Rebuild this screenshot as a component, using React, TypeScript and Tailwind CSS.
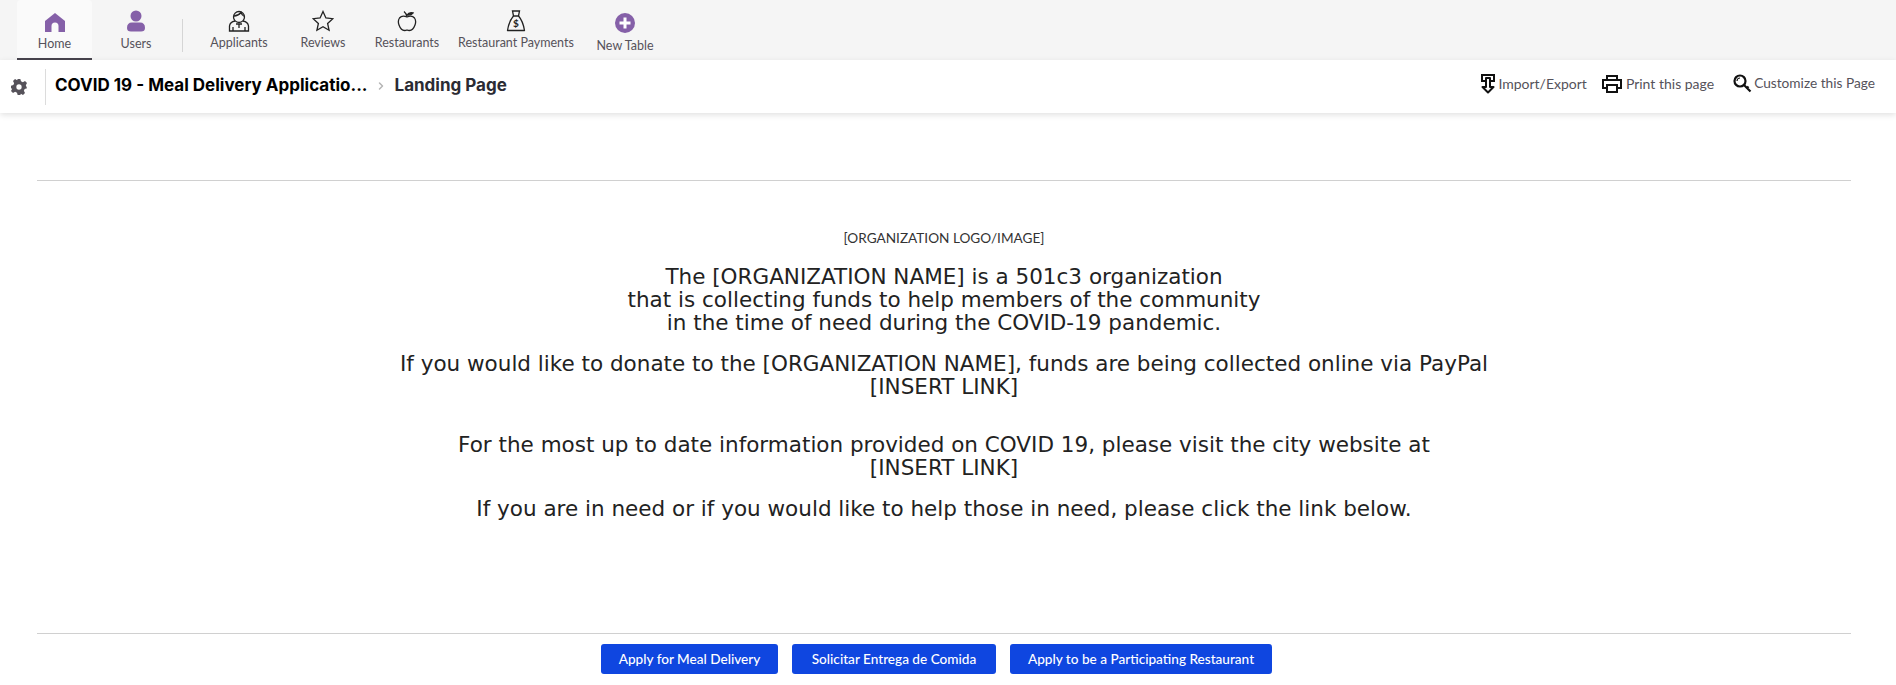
import { ChevronRight } from 'lucide-react'

function HomeIcon() {
  return (
    <svg width="20" height="20" viewBox="0 0 20 20" className="text-[#8560a8]" fill="currentColor">
      <path d="M10 1 L20 9 V20 H13.5 V14 Q13.5 10.5 10 10.5 Q6.5 10.5 6.5 14 V20 H0 V9 Z" />
    </svg>
  )
}

function UserIcon() {
  return (
    <svg width="18" height="22" viewBox="0 0 18 22" fill="#8560a8">
      <circle cx="9" cy="6" r="5.5" />
      <path d="M0 18 Q0 12.5 5 12.5 H13 Q18 12.5 18 18 Q18 21.5 14 21.5 H4 Q0 21.5 0 18 Z" />
    </svg>
  )
}

function ApplicantIcon() {
  return (
    <svg width="22" height="22" viewBox="0 0 22 22" fill="none" stroke="#222" strokeWidth="1.3">
      <circle cx="11" cy="7" r="5.5" />
      <path d="M6 6 Q10 6 13 2.5 Q14 5.5 16.5 6.5" />
      <path d="M7 11 Q2 12 1.5 16 V21 H20.5 V16 Q20 12 15 11" />
      <path d="M8 14 H14 M11 14 V18 M5 21 V17 M17 21 V17" />
    </svg>
  )
}

function StarIcon() {
  return (
    <svg width="22" height="22" viewBox="0 0 22 22" fill="none" stroke="#222" strokeWidth="1.3">
      <path d="M11 1.5 L13.9 8 L20.8 8.7 L15.6 13.4 L17.1 20.3 L11 16.8 L4.9 20.3 L6.4 13.4 L1.2 8.7 L8.1 8 Z" />
    </svg>
  )
}

function AppleIcon() {
  return (
    <svg width="20" height="22" viewBox="0 0 20 22" fill="none" stroke="#222" strokeWidth="1.3">
      <path d="M10 7 Q5 5 2.5 8 Q0.5 11 2 15 Q4 20.5 7.5 20.5 Q9 20.5 10 20 Q11 20.5 12.5 20.5 Q16 20.5 18 15 Q19.500 11 17.500 8 Q15 5 10 7 Z" />
      <path d="M10 7 Q9.500 3.500 7 1.500" />
      <path d="M10 5 Q12 2 16 3 Q14 5.500 10 5 Z" fill="#222" />
    </svg>
  )
}

function MoneyBagIcon() {
  return (
    <svg width="20" height="22" viewBox="0 0 20 22" fill="none" stroke="#222" strokeWidth="1.3">
      <path d="M6.500 1 H13.500 L12.500 6 H7.500 Z" />
      <path d="M7.500 6 Q3 11 1.500 20.500 H18.500 Q17 11 12.500 6" strokeLinejoin="round" />
      <text x="10" y="17" textAnchor="middle" fontSize="10" fontWeight="700" fill="#222" stroke="none" fontFamily="Lato, sans-serif">$</text>
    </svg>
  )
}

function PlusCircleIcon() {
  return (
    <svg width="20" height="20" viewBox="0 0 20 20">
      <circle cx="10" cy="10" r="10" fill="#8560a8" />
      <path d="M10 4.500 V15.500 M4.500 10 H15.500" stroke="#fff" strokeWidth="3" />
    </svg>
  )
}

function GearIcon() {
  return (
    <svg width="16" height="16" viewBox="0 0 24 24" fill="#56525a">
      <path fillRule="evenodd" d="M10 0 H14 L15 3.500 L17.800 4.700 L21 3 L24 6 L22.200 9.200 L23.300 12 L24 14 L20.500 15 L19.300 17.800 L21 21 L18 24 L14.800 22.200 L14 24 H10 L9 20.500 L6.200 19.300 L3 21 L0 18 L1.800 14.800 L0 14 V10 L3.500 9 L4.700 6.200 L3 3 L6 0 L9.200 1.800 Z M12 8 A4 4 0 1 0 12 16 A4 4 0 1 0 12 8 Z" />
    </svg>
  )
}

function ImportExportIcon() {
  return (
    <svg width="14" height="20" viewBox="0 0 14 20" fill="none" stroke="#111" strokeWidth="2">
      <path d="M4 7 H1 V1 H13 V7 H10" />
      <path d="M5 4 H9 V13 H12.500 L7 18.500 L1.500 13 H5 Z" strokeLinejoin="round" />
    </svg>
  )
}

function PrintIcon() {
  return (
    <svg width="20" height="18" viewBox="0 0 20 18" fill="none" stroke="#111" strokeWidth="2">
      <path d="M5 5 V1 H15 V5" />
      <path d="M5 13 H1 V5 H19 V13 H15" />
      <path d="M5 10 H15 V17 H5 Z" />
    </svg>
  )
}

function KeyIcon() {
  return (
    <svg width="19" height="19" viewBox="0 0 19 19" fill="none" stroke="#111" strokeWidth="2.200">
      <circle cx="7" cy="7" r="5.500" />
      <path d="M4 7 A3 3 0 0 1 7 4" strokeWidth="1.200" />
      <path d="M11 11 L17.500 17.500 M14 14 L15.500 12.500" />
    </svg>
  )
}

const navItems = [
  { label: 'Applicants', icon: <ApplicantIcon />, width: 'w-[104px]' },
  { label: 'Reviews', icon: <StarIcon />, width: 'w-[64px]' },
  { label: 'Restaurants', icon: <AppleIcon />, width: 'w-[104px]' },
  { label: 'Restaurant Payments', icon: <MoneyBagIcon />, width: 'w-[114px]' },
]

export default function App() {
  return (
    <div className="min-h-[685px] bg-white font-['Lato',sans-serif] overflow-hidden">
      {/* Top nav */}
      <nav className="h-[60px] bg-[#f5f5f5] flex pl-[17px] text-[12.5px] text-[#55525a]">
        <a className="w-[75px] h-[60px] bg-[#fafafa] border-b-2 border-[#48454e] rounded-t-sm flex flex-col items-center pt-[12px] gap-[3px]">
          <HomeIcon />
          <span>Home</span>
        </a>
        <a className="w-[88px] h-[60px] flex flex-col items-center pt-[10px] gap-[3px]">
          <UserIcon />
          <span>Users</span>
        </a>
        <div className="w-px h-[33px] bg-[#d5d5d5] mt-[19px] ml-[2px]" />
        <div className="flex ml-[4px]">
          {navItems.map((item) => (
            <a key={item.label} className={`${item.width} h-[60px] flex flex-col items-center pt-[10px] gap-[2px] whitespace-nowrap`}>
              {item.icon}
              <span>{item.label}</span>
            </a>
          ))}
        </div>
        <a className="w-[100px] ml-[2px] h-[60px] flex flex-col items-center pt-[13px] gap-[4px]">
          <PlusCircleIcon />
          <span>New Table</span>
        </a>
      </nav>

      {/* Breadcrumb bar */}
      <header className="h-[53px] bg-white shadow-[0_2px_6px_rgba(0,0,0,0.12)] flex items-center relative">
        <div className="w-[46px] h-[36px] border-r border-[#dcdcdc] flex items-center pl-[11px]">
          <GearIcon />
        </div>
        <div className="mb-[2px] flex items-center font-['Inter',sans-serif] font-bold text-[17px] whitespace-nowrap">
          <span className="ml-[9px] text-black">COVID 19 - Meal Delivery Applicatio...</span>
          <ChevronRight className="ml-[7px] text-[#b5b5b5]" size={12} strokeWidth={3} />
          <span className="ml-[8px] text-[#2b2b33]">Landing Page</span>
        </div>
        <div className="ml-auto mr-[21px] mb-[6px] flex items-center text-[14px] text-[#55525a]">
          <span className="flex items-center gap-[3px]"><ImportExportIcon />Import/Export</span>
          <span className="flex items-center gap-[4px] ml-[15px]"><PrintIcon />Print this page</span>
          <span className="flex items-center gap-[2px] ml-[19px] text-[13.7px]"><KeyIcon />Customize this Page</span>
        </div>
      </header>

      {/* Main content */}
      <main className="pl-[37px] pr-[45px]">
        <hr className="mt-[67px] border-t border-[#d0d0d0]" />
        <div className="text-center text-[#222] font-['DejaVu_Sans',sans-serif] text-[21.5px] leading-[23px]">
          <p className="mt-[49px] text-[13.6px] leading-4 font-['Lato',sans-serif] text-[#333]">[ORGANIZATION LOGO/IMAGE]</p>
          <div className="mt-[19px]">
            <p>The [ORGANIZATION NAME] is a 501c3 organization</p>
            <p>that is collecting funds to help members of the community</p>
            <p>in the time of need during the COVID-19 pandemic.</p>
          </div>
          <div className="mt-[18px]">
            <p>If you would like to donate to the [ORGANIZATION NAME], funds are being collected online via PayPal</p>
            <p>[INSERT LINK]</p>
          </div>
          <div className="mt-[35px]">
            <p>For the most up to date information provided on COVID 19, please visit the city website at</p>
            <p>[INSERT LINK]</p>
          </div>
          <p className="mt-[18px]">If you are in need or if you would like to help those in need, please click the link below.</p>
        </div>
        <hr className="mt-[113px] border-t border-[#d0d0d0]" />
        <div className="mt-[10px] pr-[15px] flex justify-center gap-[14px] text-[13.6px] font-medium text-white">
          <button className="w-[177px] h-[30px] bg-[#0f46e0] rounded-[3px]">Apply for Meal Delivery</button>
          <button className="w-[204px] h-[30px] bg-[#0f46e0] rounded-[3px]">Solicitar Entrega de Comida</button>
          <button className="w-[262px] h-[30px] bg-[#0f46e0] rounded-[3px]">Apply to be a Participating Restaurant</button>
        </div>
      </main>
    </div>
  )
}
